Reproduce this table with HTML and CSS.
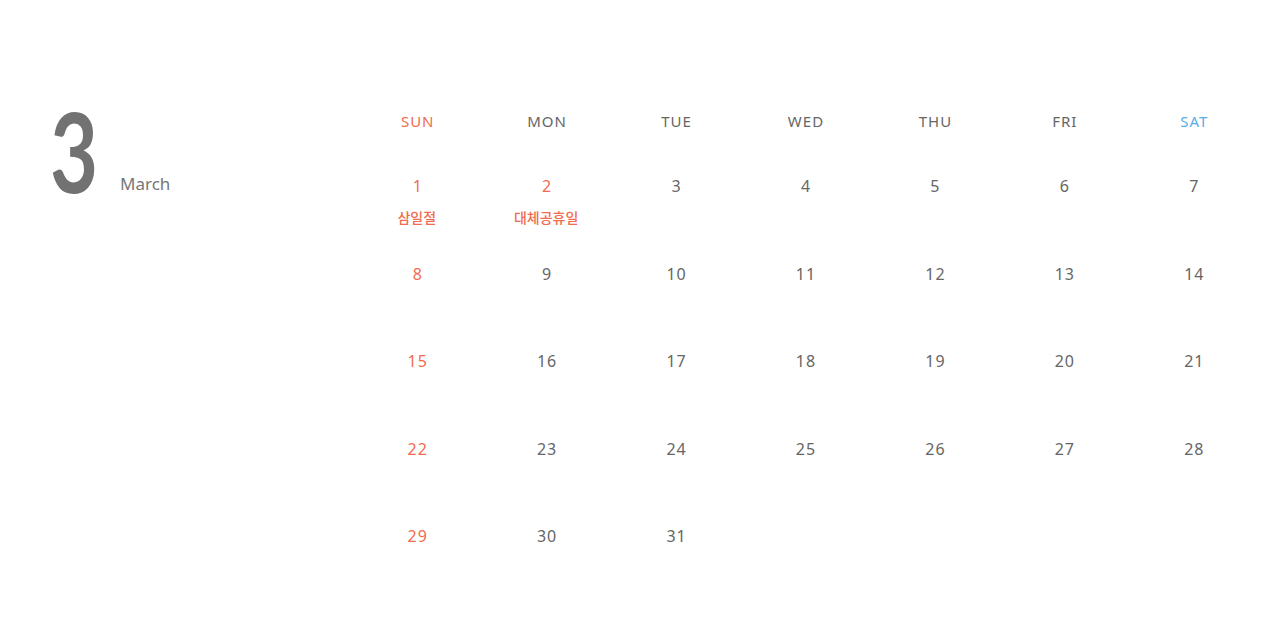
FILE: index.html
```html
<!DOCTYPE html>
<html lang="ko">
<head>
<meta charset="utf-8">
<title>March</title>
<link rel="stylesheet" href="styles.css">
</head>
<body>
<div class="page">
  <div class="month">
    <span class="month-num">3</span>
    <span class="month-name">March</span>
  </div>
  <div class="calendar">
    <div class="week head">
      <div class="dow sun">SUN</div>
      <div class="dow">MON</div>
      <div class="dow">TUE</div>
      <div class="dow">WED</div>
      <div class="dow">THU</div>
      <div class="dow">FRI</div>
      <div class="dow sat">SAT</div>
    </div>
    <div class="week">
      <div class="day sun"><span class="n">1</span><span class="hol">삼일절</span></div>
      <div class="day sun"><span class="n">2</span><span class="hol">대체공휴일</span></div>
      <div class="day"><span class="n">3</span></div>
      <div class="day"><span class="n">4</span></div>
      <div class="day"><span class="n">5</span></div>
      <div class="day"><span class="n">6</span></div>
      <div class="day"><span class="n">7</span></div>
    </div>
    <div class="week">
      <div class="day sun"><span class="n">8</span></div>
      <div class="day"><span class="n">9</span></div>
      <div class="day"><span class="n">10</span></div>
      <div class="day"><span class="n">11</span></div>
      <div class="day"><span class="n">12</span></div>
      <div class="day"><span class="n">13</span></div>
      <div class="day"><span class="n">14</span></div>
    </div>
    <div class="week">
      <div class="day sun"><span class="n">15</span></div>
      <div class="day"><span class="n">16</span></div>
      <div class="day"><span class="n">17</span></div>
      <div class="day"><span class="n">18</span></div>
      <div class="day"><span class="n">19</span></div>
      <div class="day"><span class="n">20</span></div>
      <div class="day"><span class="n">21</span></div>
    </div>
    <div class="week">
      <div class="day sun"><span class="n">22</span></div>
      <div class="day"><span class="n">23</span></div>
      <div class="day"><span class="n">24</span></div>
      <div class="day"><span class="n">25</span></div>
      <div class="day"><span class="n">26</span></div>
      <div class="day"><span class="n">27</span></div>
      <div class="day"><span class="n">28</span></div>
    </div>
    <div class="week">
      <div class="day sun"><span class="n">29</span></div>
      <div class="day"><span class="n">30</span></div>
      <div class="day"><span class="n">31</span></div>
      <div class="day"></div>
      <div class="day"></div>
      <div class="day"></div>
      <div class="day"></div>
    </div>
  </div>
</div>
</body>
</html>
```
FILE: styles.css
```css
html, body {
  margin: 0;
  padding: 0;
  background: #ffffff;
}
body {
  font-family: "Noto Sans", "Noto Sans CJK KR", sans-serif;
  color: #666666;
  width: 1280px;
  height: 627px;
  overflow: hidden;
}
.page {
  display: flex;
  align-items: flex-start;
}
.month {
  width: 302px;
  padding-left: 50px;
  padding-top: 94px;
  display: flex;
  align-items: baseline;
  gap: 20px;
}
.month-num {
  display: inline-block;
  font-family: Lato, "Noto Sans", sans-serif;
  font-weight: 700;
  font-size: 112px;
  line-height: 112px;
  color: #727272;
  transform: scaleX(0.74);
  transform-origin: left center;
  width: 50px;
}
.month-name {
  font-family: "Noto Sans", sans-serif;
  font-size: 17px;
  color: #777777;
  position: relative;
  top: -3px;
}
.calendar {
  width: 906px;
  padding-top: 110px;
}
.week {
  display: grid;
  grid-template-columns: repeat(7, 1fr);
  height: 87.5px;
}
.week.head {
  height: 65px;
}
.dow {
  text-align: center;
  font-size: 15px;
  line-height: 22px;
  letter-spacing: 1px;
  text-indent: 2px;
  color: #666666;
}
.day {
  display: flex;
  flex-direction: column;
  align-items: center;
}
.n {
  font-size: 16px;
  line-height: 22px;
  letter-spacing: 1px;
  padding-left: 2px;
  color: #666666;
}
.hol {
  margin-top: 10px;
  font-family: "Noto Sans CJK KR", sans-serif;
  font-weight: 500;
  font-size: 14px;
  line-height: 20px;
  color: #f06c50;
}
.sun, .sun .n {
  color: #f06c50;
}
.sat {
  color: #5aaee6;
}
```
